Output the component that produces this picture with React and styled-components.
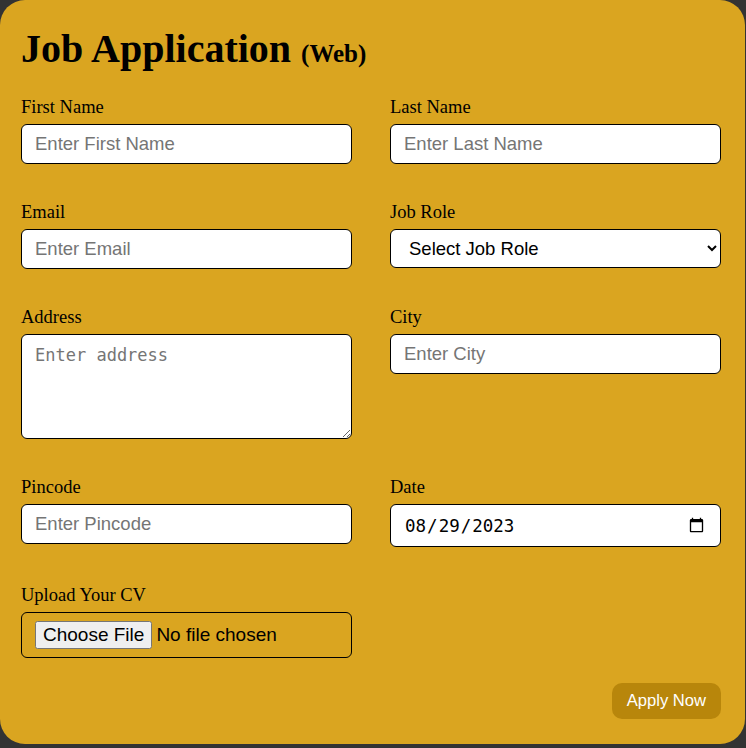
import React from "react";
import styled, { createGlobalStyle } from "styled-components";

const GlobalStyle = createGlobalStyle`
  body {
    margin: 0;
    background-color: #333333;
    font-family: "Liberation Serif", "Times New Roman", serif;
  }
`;

const Card = styled.form`
  box-sizing: border-box;
  width: 745px;
  background-color: #daa520;
  border-radius: 25px;
  padding: 25px 24px 25px 21px;
  display: flex;
  flex-direction: column;
`;

const Title = styled.h1`
  margin: 0 0 25px 0;
  font-size: 40px;
  font-weight: bold;
  color: black;
`;

const SubTitle = styled.span`
  font-size: 25px;
`;

const Grid = styled.div`
  display: grid;
  grid-template-columns: 331px 331px;
  column-gap: 38px;
  row-gap: 38px;
  align-items: start;
`;

const Field = styled.div`
  display: flex;
  flex-direction: column;
`;

const Label = styled.label`
  font-size: 18.5px;
  color: black;
  margin-bottom: 6px;
`;

const Input = styled.input`
  box-sizing: border-box;
  width: 100%;
  height: ${(p) => (p.$mono ? "43px" : "auto")};
  padding: 8px 13px;
  font-family: ${(p) => (p.$mono ? '"DejaVu Sans Mono", monospace' : '"Liberation Sans", Arial, sans-serif')};
  font-size: ${(p) => (p.$mono ? "17.5px" : "18.5px")};
  border: 1px solid black;
  border-radius: 6px;
  background: white;
  color: black;
`;

const Select = styled.select`
  box-sizing: border-box;
  width: 100%;
  height: 39px;
  padding: 0 14px;
  font-family: "Liberation Sans", Arial, sans-serif;
  font-size: 18.5px;
  border: 1px solid black;
  border-radius: 6px;
  background: white;
  color: black;
`;

const TextArea = styled.textarea`
  box-sizing: border-box;
  width: 100%;
  height: 105px;
  padding: 10px 13px;
  font-family: "DejaVu Sans Mono", monospace;
  font-size: 17px;
  border: 1px solid black;
  border-radius: 6px;
  background: white;
`;

const FileInput = styled.input`
  box-sizing: border-box;
  width: 100%;
  padding: 8px 13px;
  font-family: "Liberation Sans", Arial, sans-serif;
  font-size: 19px;
  border: 1px solid black;
  border-radius: 6px;
  background: transparent;
  color: black;
`;

const Footer = styled.div`
  display: flex;
  justify-content: flex-end;
  margin-top: 25px;
`;

const ApplyButton = styled.button`
  background-color: #b8860b;
  color: white;
  border: none;
  border-radius: 10px;
  padding: 8px 15px;
  font-family: "Liberation Sans", Arial, sans-serif;
  font-size: 16.6px;
`;

export default function App() {
  return (
    <>
      <GlobalStyle />
      <Card onSubmit={(e) => e.preventDefault()}>
        <Title>
          Job Application <SubTitle>(Web)</SubTitle>
        </Title>
        <Grid>
          <Field>
            <Label>First Name</Label>
            <Input type="text" placeholder="Enter First Name" />
          </Field>
          <Field>
            <Label>Last Name</Label>
            <Input type="text" placeholder="Enter Last Name" />
          </Field>
          <Field>
            <Label>Email</Label>
            <Input type="email" placeholder="Enter Email" />
          </Field>
          <Field>
            <Label>Job Role</Label>
            <Select defaultValue="">
              <option value="">Select Job Role</option>
              <option value="frontend">Frontend Developer</option>
              <option value="backend">Backend Developer</option>
              <option value="fullstack">Full Stack Developer</option>
            </Select>
          </Field>
          <Field>
            <Label>Address</Label>
            <TextArea placeholder="Enter address" />
          </Field>
          <Field>
            <Label>City</Label>
            <Input type="text" placeholder="Enter City" />
          </Field>
          <Field>
            <Label>Pincode</Label>
            <Input type="text" placeholder="Enter Pincode" />
          </Field>
          <Field>
            <Label>Date</Label>
            <Input type="date" $mono defaultValue="2023-08-29" />
          </Field>
          <Field>
            <Label>Upload Your CV</Label>
            <FileInput type="file" />
          </Field>
        </Grid>
        <Footer>
          <ApplyButton type="submit">Apply Now</ApplyButton>
        </Footer>
      </Card>
    </>
  );
}
